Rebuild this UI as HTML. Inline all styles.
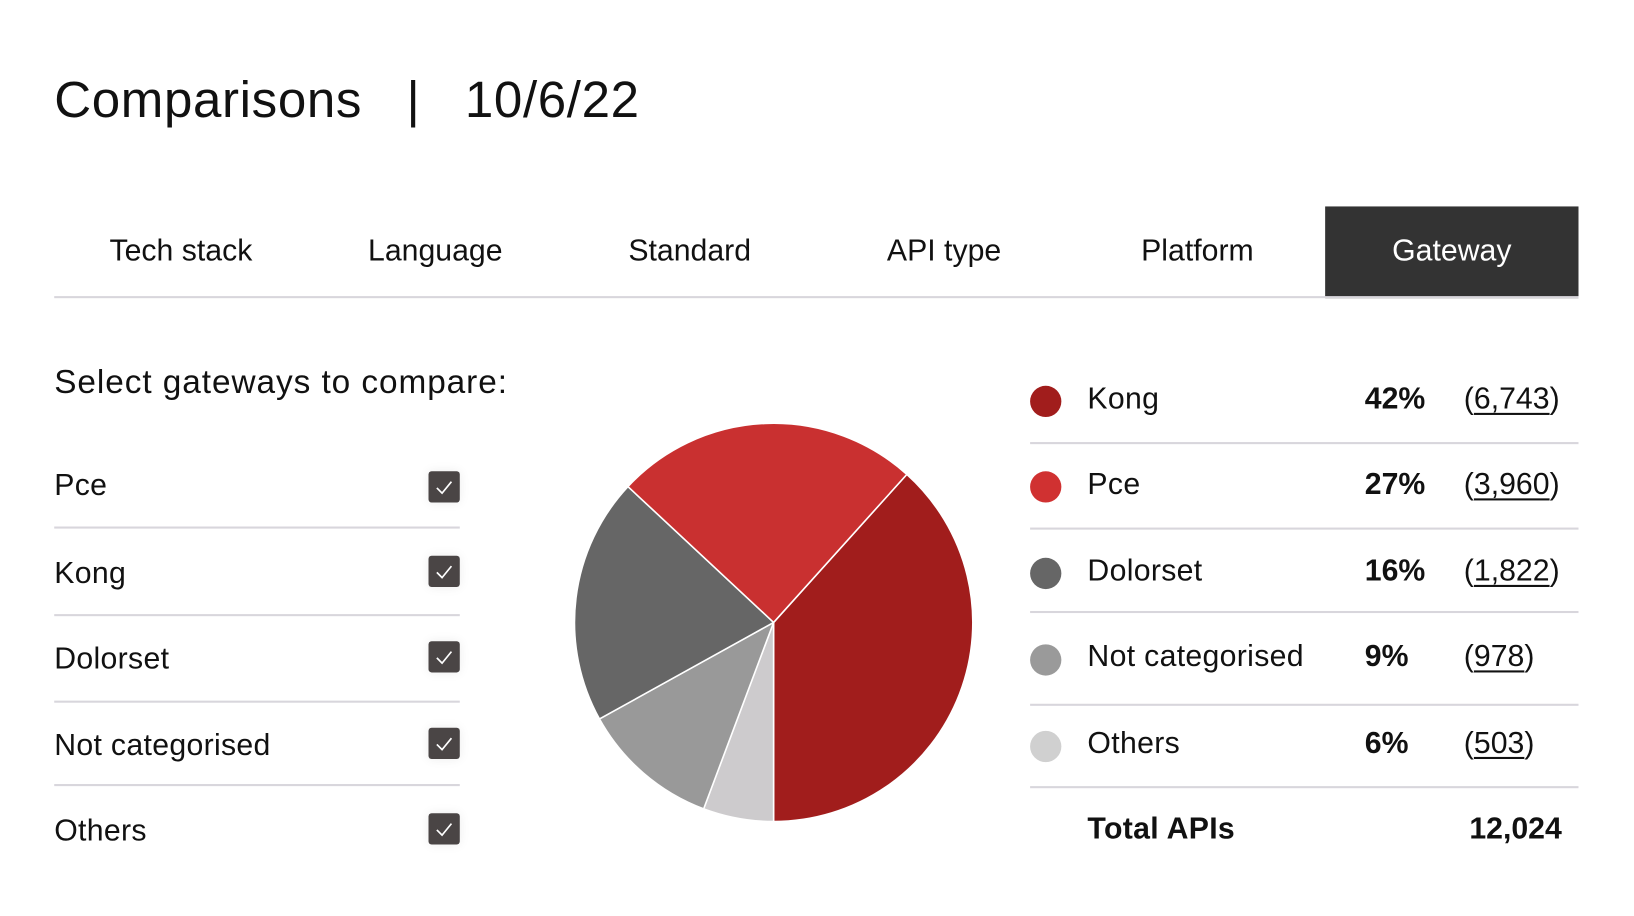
<!DOCTYPE html>
<html><head><meta charset="utf-8"><style>
html,body{margin:0;padding:0;background:#fff;width:1634px;height:916px;overflow:hidden}
#w{position:absolute;left:0;top:0;width:1560px;height:875px;transform:scale(1.0426);transform-origin:0 0;font-family:"Liberation Sans",sans-serif;color:#111}
.a{position:absolute;white-space:nowrap}
.t{font-size:29px;top:225px;width:243px;text-align:center;line-height:32px}
.ln{position:absolute;height:2px;background:#d8d6dc}
.cb{position:absolute;left:411px;width:30px;height:30px;background:#4a4545;border-radius:3px;box-shadow:0 0 10px rgba(0,0,0,.08)}
.cb svg{position:absolute;left:0;top:0}
.lt{left:52px;font-size:29px;line-height:32px;letter-spacing:0.3px}
.dot{position:absolute;left:988px;width:30px;height:30px;border-radius:50%}
.nm{left:1043px;font-size:29px;line-height:32px;letter-spacing:0.3px}
.pc{left:1309px;font-size:29px;font-weight:bold;line-height:32px}
.ct{left:1404px;font-size:29px;line-height:32px}
.ct u{text-underline-offset:4px;text-decoration-thickness:1.5px}
</style></head><body><div id="w">
<div class="a" style="left:52px;top:68px;font-size:49px;line-height:56px;letter-spacing:0.6px">Comparisons &nbsp;&nbsp;| &nbsp;&nbsp;10/6/22</div>
<div style="position:absolute;left:1271px;top:198px;width:243px;height:88px;background:#333"></div>
<div class="a t" style="left:52px">Tech stack</div>
<div class="a t" style="left:296px">Language</div>
<div class="a t" style="left:540px">Standard</div>
<div class="a t" style="left:784px">API type</div>
<div class="a t" style="left:1027px">Platform</div>
<div class="a t" style="left:1271px;color:#fff">Gateway</div>
<div class="ln" style="left:52px;top:284px;width:1462px"></div>
<div class="a" style="left:52px;top:348px;font-size:32px;line-height:36px;letter-spacing:0.9px">Select gateways to compare:</div>
<div class="a lt" style="top:450px">Pce</div>
<div class="a lt" style="top:534px">Kong</div>
<div class="a lt" style="top:616px">Dolorset</div>
<div class="a lt" style="top:699px">Not categorised</div>
<div class="a lt" style="top:781px">Others</div>
<div class="ln" style="left:52px;top:505px;width:389px"></div>
<div class="ln" style="left:52px;top:589px;width:389px"></div>
<div class="ln" style="left:52px;top:672px;width:389px"></div>
<div class="ln" style="left:52px;top:752px;width:389px"></div>
<div class="cb" style="top:452px"><svg width="30" height="30"><path d="M8 16 L13 21 L22 10" stroke="#fff" stroke-width="1.6" fill="none"/></svg></div>
<div class="cb" style="top:533px"><svg width="30" height="30"><path d="M8 16 L13 21 L22 10" stroke="#fff" stroke-width="1.6" fill="none"/></svg></div>
<div class="cb" style="top:615px"><svg width="30" height="30"><path d="M8 16 L13 21 L22 10" stroke="#fff" stroke-width="1.6" fill="none"/></svg></div>
<div class="cb" style="top:698px"><svg width="30" height="30"><path d="M8 16 L13 21 L22 10" stroke="#fff" stroke-width="1.6" fill="none"/></svg></div>
<div class="cb" style="top:780px"><svg width="30" height="30"><path d="M8 16 L13 21 L22 10" stroke="#fff" stroke-width="1.6" fill="none"/></svg></div>
<svg style="position:absolute;left:0;top:0" width="1560" height="875">
<g stroke="#fff" stroke-width="1.5" stroke-linejoin="round">
<path d="M742 597 L869.8 455 A191 191 0 0 1 742 788 Z" fill="#a11d1c"/>
<path d="M742 597 L742 788 A191 191 0 0 1 674.9 775.8 Z" fill="#cdcbcd"/>
<path d="M742 597 L674.9 775.8 A191 191 0 0 1 575 689.6 Z" fill="#999"/>
<path d="M742 597 L575 689.6 A191 191 0 0 1 602.3 466.7 Z" fill="#666"/>
<path d="M742 597 L602.3 466.7 A191 191 0 0 1 869.8 455 Z" fill="#c93030"/>
</g></svg>
<div class="dot" style="top:370px;background:#a11d1c"></div>
<div class="dot" style="top:452px;background:#d03131"></div>
<div class="dot" style="top:535px;background:#666"></div>
<div class="dot" style="top:618px;background:#9a9a9a"></div>
<div class="dot" style="top:701px;background:#d0d0d0"></div>
<div class="a nm" style="top:367px">Kong</div><div class="a pc" style="top:367px">42%</div><div class="a ct" style="top:367px">(<u>6,743</u>)</div>
<div class="a nm" style="top:449px">Pce</div><div class="a pc" style="top:449px">27%</div><div class="a ct" style="top:449px">(<u>3,960</u>)</div>
<div class="a nm" style="top:532px">Dolorset</div><div class="a pc" style="top:532px">16%</div><div class="a ct" style="top:532px">(<u>1,822</u>)</div>
<div class="a nm" style="top:614px">Not categorised</div><div class="a pc" style="top:614px">9%</div><div class="a ct" style="top:614px">(<u>978</u>)</div>
<div class="a nm" style="top:697px">Others</div><div class="a pc" style="top:697px">6%</div><div class="a ct" style="top:697px">(<u>503</u>)</div>
<div class="a nm" style="top:779px;font-weight:bold">Total APIs</div>
<div class="a" style="left:1300px;width:198px;text-align:right;top:779px;font-size:29px;font-weight:bold;line-height:32px">12,024</div>
<div class="ln" style="left:988px;top:424px;width:526px"></div>
<div class="ln" style="left:988px;top:506px;width:526px"></div>
<div class="ln" style="left:988px;top:586px;width:526px"></div>
<div class="ln" style="left:988px;top:675px;width:526px"></div>
<div class="ln" style="left:988px;top:754px;width:526px"></div>
</div></body></html>
